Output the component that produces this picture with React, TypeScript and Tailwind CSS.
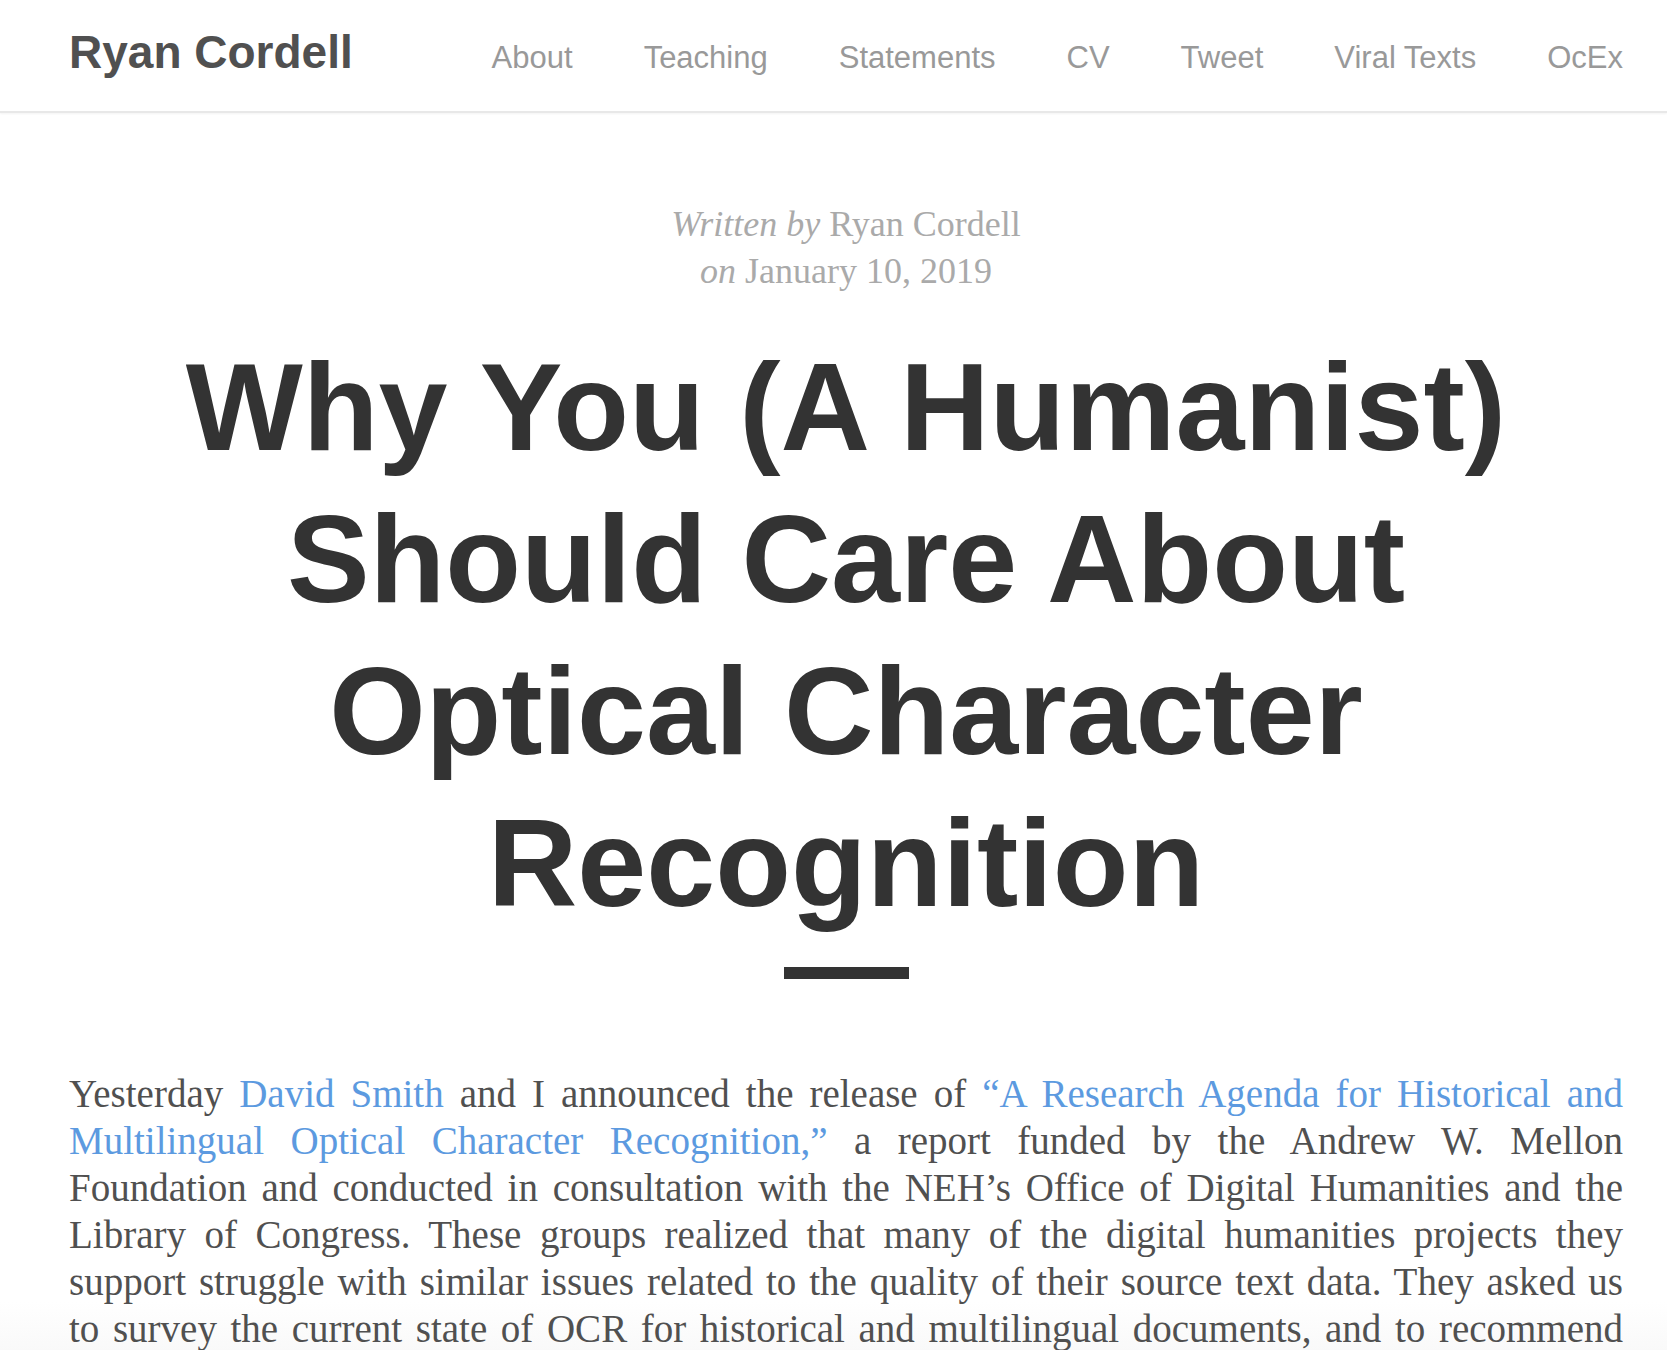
import React from "react";

const navItems = ["About", "Teaching", "Statements", "CV", "Tweet", "Viral Texts", "OcEx"];

export default function App() {
  return (
    <div className="min-h-screen bg-white bg-[linear-gradient(to_top,#f9f9f9,#ffffff_50px)] font-['Liberation_Serif',serif] text-[#505050]">
      <header className="flex items-baseline justify-between border-b-2 border-[#e8e8e8] pt-6 pr-11 pb-[31px] pl-[69px] font-['Liberation_Sans',sans-serif] shadow-xs">
        <a href="#home" className="text-[46px] leading-[56px] font-bold text-[#505050]">Ryan Cordell</a>
        <nav className="flex gap-[71px] text-[31px] leading-10 text-[#999999]">
          {navItems.map((item) => (
            <a key={item} href="#nav">{item}</a>
          ))}
        </nav>
      </header>
      <main className="pr-11 pl-[69px]">
        <div className="pt-[88px] text-center text-[36px] leading-[47px] text-[#aaaaaa]">
          <p><em>Written by</em> Ryan Cordell</p>
          <p><em>on</em> January 10, 2019</p>
        </div>
        <h1 className="mt-9 text-center font-['Liberation_Sans',sans-serif] text-[124px] leading-[152px] font-bold text-[#333333]">
          Why You (A Humanist)<br />Should Care About<br />Optical Character<br />Recognition
        </h1>
        <hr className="mx-auto mt-7 h-3 w-[125px] border-0 bg-[#333333]" />
        <p className="mt-[91px] text-justify text-[39px] leading-[47px] [text-align-last:justify]">
          Yesterday <a href="#david-smith" className="text-[#5c9ae0]">David Smith</a> and I announced the release of <a href="#report" className="text-[#5c9ae0]">“A Research Agenda for Historical and Multilingual Optical Character Recognition,”</a> a report funded by the Andrew W. Mellon Foundation and conducted in consultation with the NEH’s Office of Digital Humanities and the Library of Congress. These groups realized that many of the digital humanities projects they support struggle with similar issues related to the quality of their source text data. They asked us to&nbsp;survey the current state of OCR for historical and multilingual documents, and to recommend
        </p>
      </main>
    </div>
  );
}
